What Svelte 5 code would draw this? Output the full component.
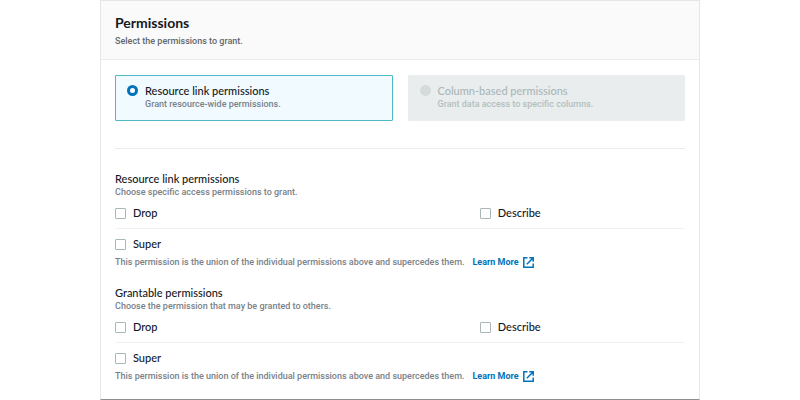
<script lang="ts">
	interface Option {
		value: string;
		label: string;
		description: string;
		disabled?: boolean;
	}

	const options: Option[] = [
		{
			value: 'resource',
			label: 'Resource link permissions',
			description: 'Grant resource-wide permissions.'
		},
		{
			value: 'column',
			label: 'Column-based permissions',
			description: 'Grant data access to specific columns.',
			disabled: true
		}
	];

	const groups = [
		{
			id: 'link',
			title: 'Resource link permissions',
			hint: 'Choose specific access permissions to grant.'
		},
		{
			id: 'grantable',
			title: 'Grantable permissions',
			hint: 'Choose the permission that may be granted to others.'
		}
	];

	let scope = $state('resource');
	let checked = $state<Record<string, string[]>>({ link: [], grantable: [] });
</script>

{#snippet check(group: string, label: string)}
	<label class="check">
		<input type="checkbox" value={label} bind:group={checked[group]} />
		<span>{label}</span>
	</label>
{/snippet}

<main class="panel">
	<header>
		<h1>Permissions</h1>
		<p class="small">Select the permissions to grant.</p>
	</header>

	<div class="body">
		<div class="tiles" role="radiogroup" aria-label="Permission type">
			{#each options as option}
				<label class="tile" class:selected={scope === option.value} class:disabled={option.disabled}>
					<input type="radio" name="scope" value={option.value} disabled={option.disabled} bind:group={scope} />
					<span class="text">
						<span class="name">{option.label}</span>
						<span class="small">{option.description}</span>
					</span>
				</label>
			{/each}
		</div>

		<hr />

		{#each groups as group}
			<section aria-labelledby="{group.id}-title">
				<h2 id="{group.id}-title">{group.title}</h2>
				<p class="small">{group.hint}</p>
				<div class="checks">
					{@render check(group.id, 'Drop')}
					{@render check(group.id, 'Describe')}
				</div>
				<div class="super">
					{@render check(group.id, 'Super')}
				</div>
				<p class="small note">
					<span>This permission is the union of the individual permissions above and supercedes them.</span>
					<a href="#learn-more">
						Learn More
						<svg viewBox="0 0 11 11" aria-hidden="true">
							<path d="M4.5 .8H.8v9.4h9.4V6.5M6.3 .8h3.9v3.9M10 1 3.8 7.2" />
						</svg>
					</a>
				</p>
			</section>
		{/each}
	</div>
</main>

<style>
	:global(body) {
		margin: 0;
		background: #fff;
	}

	.panel {
		margin: 0 12.5%;
		border: 1px solid #e4e7e7;
		border-bottom-color: #8b8f8f;
		font-family: Lato, 'Noto Sans', sans-serif;
		font-size: 11px;
		font-weight: 500;
		color: #16191f;
	}

	header {
		padding: 11px 14px 12px;
		background: #fafafa;
		border-bottom: 1px solid #eaeded;
	}

	h1,
	h2,
	p {
		margin: 0;
	}

	h1 {
		margin-bottom: 2px;
		font-size: 14px;
		font-weight: 700;
		line-height: 21px;
	}

	.body {
		padding: 15px 14px 16px;
	}

	.tiles {
		display: grid;
		grid-template-columns: 1fr 1fr;
		gap: 15px;
	}

	.tile {
		display: flex;
		gap: 7px;
		padding: 8px 11px 10px;
		border: 1px solid #aab7b8;
		border-radius: 1px;

		&.selected {
			background: #f1faff;
			border-color: #4fb6c4;
		}

		&.disabled {
			background: #e9eded;
			border-color: #e9eded;
			color: #aab7b8;
		}
	}

	.text {
		display: flex;
		flex-direction: column;
	}

	.name,
	h2 {
		font-size: 11px;
		font-weight: 500;
		line-height: 14px;
	}

	.small {
		font-family: Roboto, 'Noto Sans', sans-serif;
		font-size: 9px;
		line-height: 12px;
		color: #7a8188;
	}

	header .small {
		color: #62686f;
	}

	.disabled .small {
		color: #b4bfc0;
	}

	input {
		appearance: none;
		flex: none;
		box-sizing: border-box;
		width: 11px;
		height: 11px;
		margin: 0;
		background: #fff;
		border: 1px solid #aab7b8;
	}

	input[type='radio'] {
		margin-top: 1px;
		border-radius: 50%;

		&:checked {
			border: 3px solid #0073bb;
		}

		&:disabled {
			background: #d5dbdb;
			border-color: #d5dbdb;
		}
	}

	input[type='checkbox'] {
		border-radius: 1px;

		&:checked {
			background: #0073bb;
			border-color: #0073bb;
		}
	}

	hr {
		height: 1px;
		margin: 27px 0 23px;
		border: 0;
		background: #eaeded;
	}

	section + section {
		margin-top: 17px;
	}

	.checks {
		display: grid;
		grid-template-columns: 64% 36%;
		padding: 7px 0;
		border-bottom: 1px solid #f0f2f2;
	}

	.check {
		display: flex;
		align-items: center;
		gap: 7px;
		line-height: 16px;
	}

	.super {
		padding: 7px 0 3px;
	}

	.note {
		display: flex;
		flex-wrap: wrap;
		gap: 0 8px;
		line-height: 14px;
	}

	a {
		display: inline-flex;
		align-items: center;
		gap: 4px;
		font-weight: 700;
		color: #0073bb;
		text-decoration: none;
	}

	svg {
		width: 11px;
		height: 11px;
		fill: none;
		stroke: currentColor;
		stroke-width: 1.5;
	}
</style>
